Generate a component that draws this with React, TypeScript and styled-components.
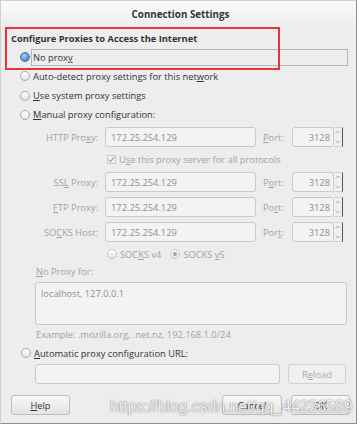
import React from 'react';
import styled, { createGlobalStyle } from 'styled-components';

const GlobalStyle = createGlobalStyle`
  body {
    margin: 0;
    background: #ffffff;
    font-family: 'Open Sans', 'DejaVu Sans', sans-serif;
    font-size: 9.3px;
    color: #2e3436;
  }
`;

const Window = styled.div`
  position: relative;
  width: 357px;
  height: 424px;
  box-sizing: border-box;
  background: #ededed;
  border: 1px solid #cfcfcf;
  border-right-color: #8e8e8e;
  border-bottom-color: #8e8e8e;
  display: flex;
  flex-direction: column;
  overflow: hidden;
`;

const TitleBar = styled.div`
  height: 26px;
  flex: none;
  display: flex;
  align-items: center;
  justify-content: center;
  background: linear-gradient(#fbfbfb, #ededed);
  font-weight: bold;
  font-size: 9.8px;
  color: #2e3436;
  text-shadow: 0 1px 0 #ffffff;
  padding-left: 4px;
`;

const Body = styled.div`
  display: flex;
  flex-direction: column;
  padding: 0 8px 0 10px;
`;

const Heading = styled.div`
  margin-top: 5px;
  height: 14px;
  line-height: 14px;
  font-weight: bold;
`;

const Row = styled.div<{ $h: number; $mt?: number; $indent?: number }>`
  display: flex;
  align-items: center;
  height: ${p => p.$h}px;
  margin-top: ${p => p.$mt ?? 0}px;
  padding-left: ${p => p.$indent ?? 0}px;
  flex: none;
`;

const Radio = styled.span<{ $checked?: boolean; $disabled?: boolean }>`
  width: 10px;
  height: 10px;
  box-sizing: border-box;
  border-radius: 50%;
  flex: none;
  position: relative;
  border: 1px solid ${p => (p.$disabled ? '#c6c6c6' : p.$checked ? '#3c6ead' : '#a9a9a9')};
  background: ${p =>
    p.$checked && !p.$disabled
      ? 'radial-gradient(circle at 40% 35%, #b9d3f2, #5b90d4 60%, #3f78c4)'
      : 'linear-gradient(#ffffff, #e4e4e4)'};
  &::after {
    content: '';
    display: ${p => (p.$checked && p.$disabled ? 'block' : 'none')};
    position: absolute;
    left: 2px;
    top: 2px;
    width: 4px;
    height: 4px;
    border-radius: 50%;
    background: #a3a3a3;
  }
`;

const Label = styled.span<{ $focus?: boolean; $disabled?: boolean; $grow?: boolean }>`
  display: block;
  height: 17px;
  line-height: 15px;
  box-sizing: border-box;
  margin-left: 1px;
  padding-left: 1px;
  border: 1px solid ${p => (p.$focus ? '#b4b4b4' : 'transparent')};
  flex: ${p => (p.$grow ? 1 : 'none')};
  color: ${p => (p.$disabled ? '#a2a2a2' : '#2e3436')};
  white-space: nowrap;
`;

const FieldLabel = styled.span<{ $w: number; $align?: string; $ml?: number }>`
  width: ${p => p.$w}px;
  margin-left: ${p => p.$ml ?? 0}px;
  text-align: ${p => p.$align ?? 'right'};
  color: #a2a2a2;
  flex: none;
  white-space: nowrap;
`;

const Field = styled.div<{ $w: number; $h?: number; $ml?: number; $right?: boolean }>`
  width: ${p => p.$w}px;
  height: ${p => p.$h ?? 20}px;
  margin-left: ${p => p.$ml ?? 0}px;
  box-sizing: border-box;
  border: 1px solid #c9c9c9;
  border-radius: 3px;
  background: #f3f3f3;
  color: #8f8f8f;
  display: flex;
  align-items: ${p => (p.$h && p.$h > 20 ? 'flex-start' : 'center')};
  justify-content: ${p => (p.$right ? 'flex-end' : 'flex-start')};
  padding: ${p => (p.$h && p.$h > 20 ? '4px 5px' : '0 3px 0 5px')};
  flex: none;
  white-space: nowrap;
`;

const Spinner = styled.div`
  width: 9px;
  height: 20px;
  box-sizing: border-box;
  border: 1px solid #d2d2d2;
  border-left: none;
  border-right-color: #555555;
  background: #f1f1f1;
  display: flex;
  flex-direction: column;
  align-items: center;
  justify-content: space-between;
  padding: 2px 0;
  flex: none;
`;

const Check = styled.span`
  width: 9px;
  height: 9px;
  box-sizing: border-box;
  border: 1px solid #c8c8c8;
  background: #f2f2f2;
  flex: none;
  display: flex;
  align-items: center;
  justify-content: center;
`;

const Gap = styled.span<{ $w: number }>`
  width: ${p => p.$w}px;
  flex: none;
`;

const Hint = styled.div<{ $mt: number; $h: number }>`
  margin-top: ${p => p.$mt}px;
  height: ${p => p.$h}px;
  line-height: ${p => p.$h}px;
  padding-left: 25px;
  color: #a2a2a2;
  flex: none;
`;

const Button = styled.div<{ $w: number; $ml?: number; $disabled?: boolean }>`
  width: ${p => p.$w}px;
  height: 20px;
  margin-left: ${p => p.$ml ?? 0}px;
  box-sizing: border-box;
  border: 1px solid ${p => (p.$disabled ? '#d2d2d2' : '#bcbcbc')};
  border-radius: 3px;
  background: ${p => (p.$disabled ? '#f0f0f0' : 'linear-gradient(#f8f8f8, #e3e3e3)')};
  color: ${p => (p.$disabled ? '#a8a8a8' : '#2e3436')};
  display: flex;
  align-items: center;
  justify-content: center;
  flex: none;
`;

const Annotation = styled.div`
  position: absolute;
  left: 4px;
  top: 26px;
  width: 275px;
  height: 43px;
  box-sizing: border-box;
  border: 2px solid #ea3339;
  pointer-events: none;
`;

const Watermark = styled.div`
  position: absolute;
  left: 109px;
  top: 397px;
  font-family: 'Liberation Sans', Arial, sans-serif;
  font-size: 15.8px;
  color: rgba(255, 255, 255, 0.9);
  text-shadow: 0 0 1px rgba(80, 80, 80, 0.7), 0 0 2px rgba(80, 80, 80, 0.4);
  white-space: nowrap;
  pointer-events: none;
`;

const Chevron = ({ up }: { up?: boolean }) => (
  <svg width="6" height="4" viewBox="0 0 6 4">
    <path d={up ? 'M0.5 3.5 L3 1 L5.5 3.5' : 'M0.5 0.5 L3 3 L5.5 0.5'} stroke="#b0b0b0" fill="none" strokeWidth="1" />
  </svg>
);

const ProxyRow = ({ label, port, mt }: { label: React.ReactNode; port: React.ReactNode; mt: number }) => (
  <Row $h={20} $mt={mt}>
    <FieldLabel $w={87}>{label}</FieldLabel>
    <Field $w={151} $ml={7}>172.25.254.129</Field>
    <FieldLabel $w={29} $ml={7} $align="left">{port}</FieldLabel>
    <Field $w={42} $right>3128</Field>
    <Spinner>
      <Chevron up />
      <Chevron />
    </Spinner>
  </Row>
);

export default function App() {
  return (
    <>
      <GlobalStyle />
      <Window>
        <TitleBar>Connection Settings</TitleBar>
        <Body>
          <Heading>Configure Proxies to Access the Internet</Heading>
          <Row $h={18} $mt={2} $indent={9}>
            <Radio $checked />
            <Label $focus $grow>No prox<u>y</u></Label>
          </Row>
          <Row $h={20} $indent={9}>
            <Radio />
            <Label>Auto-detect proxy settings for this net<u>w</u>ork</Label>
          </Row>
          <Row $h={19} $indent={9}>
            <Radio />
            <Label><u>U</u>se system proxy settings</Label>
          </Row>
          <Row $h={19} $indent={9}>
            <Radio />
            <Label><u>M</u>anual proxy configuration:</Label>
          </Row>

          <ProxyRow mt={3} label={<>HTTP Pro<u>x</u>y:</>} port={<><u>P</u>ort:</>} />
          <Row $h={18} $mt={3} $indent={96}>
            <Check>
              <svg width="7" height="7" viewBox="0 0 7 7">
                <path d="M0.8 3.6 L2.7 5.6 L6.4 0.8" stroke="#a8a8a8" strokeWidth="1.3" fill="none" />
              </svg>
            </Check>
            <Label $disabled>U<u>s</u>e this proxy server for all protocols</Label>
          </Row>
          <ProxyRow mt={4} label={<>SS<u>L</u> Proxy:</>} port={<>P<u>o</u>rt:</>} />
          <ProxyRow mt={5} label={<><u>F</u>TP Proxy:</>} port={<>Po<u>r</u>t:</>} />
          <ProxyRow mt={5} label={<>SO<u>C</u>KS Host:</>} port={<>Por<u>t</u>:</>} />

          <Row $h={18} $mt={3} $indent={96}>
            <Radio $disabled />
            <Label $disabled>SOC<u>K</u>S v4</Label>
            <Gap $w={8} />
            <Radio $disabled $checked />
            <Label $disabled>SOCKS <u>v</u>5</Label>
          </Row>
          <Hint $mt={1} $h={16}><u>N</u>o Proxy for:</Hint>
          <Row $h={43} $mt={2} $indent={24}>
            <Field $w={312} $h={43}>localhost, 127.0.0.1</Field>
          </Row>
          <Hint $mt={2} $h={16}>Example: .mozilla.org, .net.nz, 192.168.1.0/24</Hint>
          <Row $h={18} $mt={1} $indent={10}>
            <Radio />
            <Label><u>A</u>utomatic proxy configuration URL:</Label>
          </Row>
          <Row $h={20} $mt={2} $indent={24}>
            <Field $w={245} />
            <Button $w={58} $ml={8} $disabled>R<u>e</u>load</Button>
          </Row>
          <Row $h={20} $mt={11}>
            <Button $w={59}><u>H</u>elp</Button>
            <Button $w={60} $ml={152}>Cancel</Button>
            <Button $w={59} $ml={9}>OK</Button>
          </Row>
        </Body>
        <Annotation />
        <Watermark>https://blog.csdn.net/qq_44236589</Watermark>
      </Window>
    </>
  );
}
